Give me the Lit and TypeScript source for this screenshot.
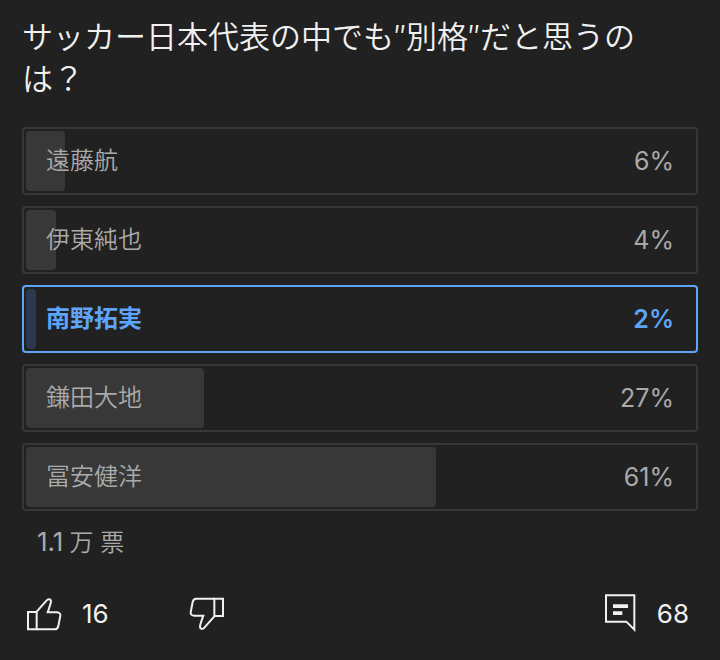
import { LitElement, html, css, svg } from "lit";
import { customElement, property, state } from "lit/decorators.js";
import { classMap } from "lit/directives/class-map.js";
import { styleMap } from "lit/directives/style-map.js";

interface Choice {
  name: string;
  percent: number;
  share: number;
}

const choices: Choice[] = [
  { name: "遠藤航", percent: 6, share: 5.8 },
  { name: "伊東純也", percent: 4, share: 4.5 },
  { name: "南野拓実", percent: 2, share: 1.5 },
  { name: "鎌田大地", percent: 27, share: 26.6 },
  { name: "冨安健洋", percent: 61, share: 61.4 },
];

const thumb = svg`
  <path d="M6 54H32V106H6Z" />
  <path d="M32 53L62 19C67 13 75 15 75 22C75 28 70 40 65 55H93Q104 56 103 65L97 96Q95 106 86 106H32" />
`;

@customElement("poll-option")
export class PollOption extends LitElement {
  @property({ attribute: false }) choice!: Choice;
  @property({ type: Boolean }) selected = false;

  static styles = css`
    :host {
      display: block;
    }
    .option {
      box-sizing: border-box;
      display: grid;
      align-items: center;
      width: 100%;
      height: 68px;
      margin: 0;
      padding: 2px;
      border: 2px solid #373737;
      border-radius: 4px;
      background: none;
      color: #aaa;
      font: inherit;
      text-align: left;
      cursor: pointer;
    }
    .fill,
    .row {
      grid-area: 1 / 1;
    }
    .fill {
      height: 100%;
      border-radius: 4px;
      background: #383838;
    }
    .row {
      display: flex;
      justify-content: space-between;
      align-items: center;
      padding: 0 20px;
    }
    .name {
      font-size: 24px;
      font-weight: 350;
      line-height: 32px;
    }
    .percent {
      font-size: 25px;
      line-height: 32px;
    }
    .selected {
      border-color: #5ea4f8;
      color: #5ea4f8;
    }
    .selected .fill {
      background: #2c3750;
    }
    .selected .name,
    .selected .percent {
      font-weight: 600;
    }
  `;

  render() {
    const { name, percent, share } = this.choice;
    return html`
      <button
        class=${classMap({ option: true, selected: this.selected })}
        aria-pressed=${this.selected ? "true" : "false"}
      >
        <span class="fill" style=${styleMap({ width: `${share}%` })}></span>
        <span class="row">
          <span class="name">${name}</span>
          <span class="percent">${percent}%</span>
        </span>
      </button>
    `;
  }
}

@customElement("app-root")
export class AppRoot extends LitElement {
  @state() private selected = 2;

  static styles = css`
    :host {
      display: block;
      box-sizing: border-box;
      min-height: 100vh;
      padding: 16px 22px 24px;
      background: #212121;
      color: #f1f1f1;
      font-family: Inter, "Noto Sans CJK JP", sans-serif;
    }
    .question {
      margin: 0 0 27px;
      padding-right: 12px;
      font-size: 31px;
      font-weight: 350;
      line-height: 42px;
    }
    .options {
      display: flex;
      flex-direction: column;
      gap: 11px;
      margin: 0;
      padding: 0;
      list-style: none;
    }
    .votes {
      margin: 15px 0 35px;
      padding: 0 15px;
      color: #aaa;
      font-size: 24px;
      font-weight: 350;
      line-height: 32px;
    }
    .total {
      margin-right: 6px;
      font-size: 26px;
      font-weight: 400;
    }
    .actions {
      display: flex;
      align-items: center;
      padding: 0 9px 0 4px;
    }
    .action {
      display: flex;
      align-items: center;
      gap: 20px;
      margin: 0;
      padding: 0;
      border: 0;
      background: none;
      color: inherit;
      font: inherit;
      font-size: 26px;
      line-height: 32px;
      cursor: pointer;
    }
    .like {
      margin-right: 80px;
    }
    .comments {
      gap: 17px;
      margin-left: auto;
    }
    .icon {
      display: block;
      width: 36px;
      height: 40px;
      fill: none;
      stroke: currentColor;
      stroke-width: 6;
    }
    .down {
      transform: rotate(180deg);
    }
    .solid {
      fill: currentColor;
      stroke: none;
    }
  `;

  render() {
    return html`
      <h1 class="question">サッカー日本代表の中でも″別格″だと思うのは？</h1>
      <ul class="options">
        ${choices.map(
          (choice, i) => html`
            <li>
              <poll-option
                .choice=${choice}
                ?selected=${i === this.selected}
                @click=${() => (this.selected = i)}
              ></poll-option>
            </li>
          `
        )}
      </ul>
      <p class="votes"><span class="total">1.1</span>万 票</p>
      <div class="actions">
        <button class="action like" aria-label="高評価 16">
          <svg class="icon" viewBox="0 0 108 120" aria-hidden="true">${thumb}</svg>
          <span>16</span>
        </button>
        <button class="action" aria-label="低評価">
          <svg class="icon down" viewBox="0 0 108 120" aria-hidden="true">${thumb}</svg>
        </button>
        <button class="action comments" aria-label="コメント 68">
          <svg class="icon" viewBox="0 0 108 120" aria-hidden="true">
            <path d="M6 4H91V107L67 83H6Z" />
            <path class="solid" d="M27 31H72V42H27ZM27 52H55V63H27Z" />
          </svg>
          <span>68</span>
        </button>
      </div>
    `;
  }
}
